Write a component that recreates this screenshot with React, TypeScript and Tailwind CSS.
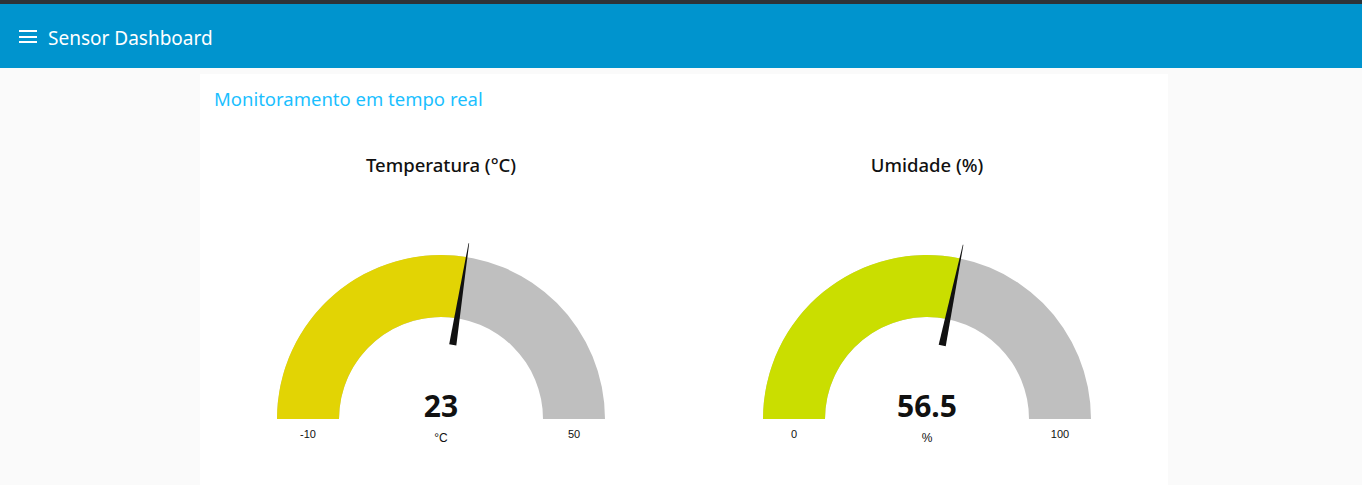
import React from "react";

type GaugeProps = {
  title: string;
  min: number;
  max: number;
  value: number;
  display: string;
  unit: string;
  color: string;
};

function Gauge({ title, min, max, value, display, unit, color }: GaugeProps) {
  const cx = 240;
  const cy = 242;
  const R = 164;
  const r = 102;
  const frac = Math.max(0, Math.min(1, (value - min) / (max - min)));
  const a = Math.PI * (1 - frac);
  const ox = cx + R * Math.cos(a);
  const oy = cy - R * Math.sin(a);
  const ix = cx + r * Math.cos(a);
  const iy = cy - r * Math.sin(a);
  const bg = `M ${cx - R} ${cy} A ${R} ${R} 0 0 1 ${cx + R} ${cy} L ${cx + r} ${cy} A ${r} ${r} 0 0 0 ${cx - r} ${cy} Z`;
  const fill = `M ${cx - R} ${cy} A ${R} ${R} 0 0 1 ${ox} ${oy} L ${ix} ${iy} A ${r} ${r} 0 0 0 ${cx - r} ${cy} Z`;
  const ux = Math.cos(a);
  const uy = -Math.sin(a);
  const px = Math.sin(a);
  const py = Math.cos(a);
  const rb = 75;
  const rt = 178;
  const hw = 3.6;
  const needle = [
    [cx + ux * rb + px * hw, cy + uy * rb + py * hw],
    [cx + ux * rb - px * hw, cy + uy * rb - py * hw],
    [cx + ux * rt - px * 0.3, cy + uy * rt - py * 0.3],
    [cx + ux * rt + px * 0.3, cy + uy * rt + py * 0.3],
  ]
    .map((p) => p.join(","))
    .join(" ");
  const mid = (R + r) / 2;
  return (
    <div className="w-[480px] flex flex-col">
      <div className="h-[24px] leading-[24px] text-center text-[18.5px] font-medium text-[#111111] font-[Noto_Sans,sans-serif]">
        {title}
      </div>
      <svg width={480} height={300} viewBox="0 0 480 300">
        <path d={bg} fill="#bfbfbf" />
        <path d={fill} fill={color} />
        <polygon points={needle} fill="#111111" />
        <text
          x={cx}
          y={240}
          textAnchor="middle"
          fontFamily="'Noto Sans', sans-serif"
          fontWeight={700}
          fontSize={30}
          fill="#111111"
        >
          {display}
        </text>
        <text
          x={cx}
          y={265}
          textAnchor="middle"
          fontFamily="'Liberation Sans', Arial, sans-serif"
          fontSize={12}
          fill="#111111"
        >
          {unit}
        </text>
        <text
          x={cx - mid}
          y={261}
          textAnchor="middle"
          fontFamily="'Liberation Sans', Arial, sans-serif"
          fontSize={11}
          fill="#111111"
        >
          {min}
        </text>
        <text
          x={cx + mid}
          y={261}
          textAnchor="middle"
          fontFamily="'Liberation Sans', Arial, sans-serif"
          fontSize={11}
          fill="#111111"
        >
          {max}
        </text>
      </svg>
    </div>
  );
}

export default function App() {
  return (
    <div className="w-[1362px] h-[485px] overflow-hidden bg-[#fafafa] font-[Noto_Sans,sans-serif]">
      <div className="h-[4px] bg-[#2e3338]" />
      <header className="h-[64px] bg-[#0094ce] flex items-center pl-[19px]">
        <svg width="18" height="14" viewBox="0 0 18 14" className="mr-[11px] mt-[2px]">
          <rect x="0" y="0" width="18" height="2" fill="#ffffff" />
          <rect x="0" y="6" width="18" height="2" fill="#ffffff" />
          <rect x="0" y="11" width="18" height="2" fill="#ffffff" />
        </svg>
        <span className="text-white text-[19px] leading-[24px] mt-[3px]">Sensor Dashboard</span>
      </header>
      <main className="pt-[6px]">
        <div className="ml-[200px] w-[968px] h-[420px] bg-white pt-[13px]">
          <h2 className="pl-[14px] text-[18.5px] leading-[24px] text-[#1bbfff]">
            Monitoramento em tempo real
          </h2>
          <div className="mt-[42px] pl-[1px] flex gap-[6px]">
            <Gauge
              title="Temperatura (°C)"
              min={-10}
              max={50}
              value={23}
              display="23"
              unit="°C"
              color="#e2d404"
            />
            <Gauge
              title="Umidade (%)"
              min={0}
              max={100}
              value={56.5}
              display="56.5"
              unit="%"
              color="#cade00"
            />
          </div>
        </div>
      </main>
    </div>
  );
}
